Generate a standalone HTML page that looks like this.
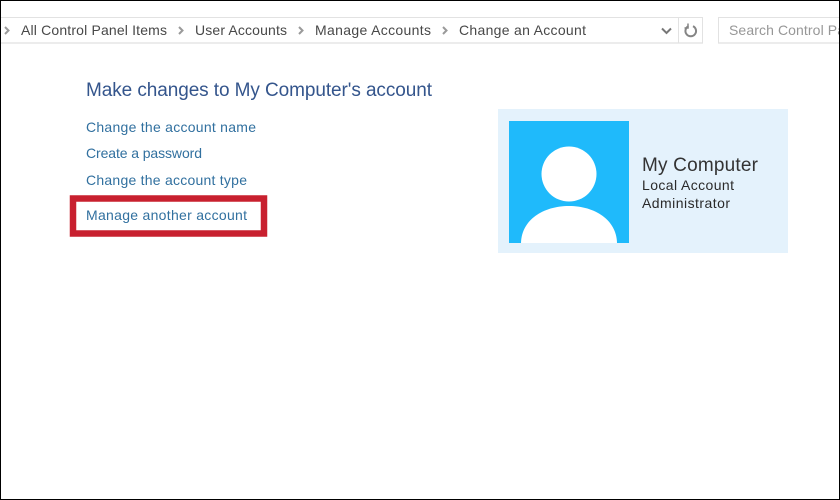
<!DOCTYPE html>
<html><head><meta charset="utf-8"><style>
html,body{margin:0;padding:0;background:#fff;width:840px;height:500px;overflow:hidden}
svg{display:block}
text{font-family:"Liberation Sans",sans-serif;filter:blur(.25px)}
</style></head><body>
<svg width="840" height="500" viewBox="0 0 840 500" xmlns="http://www.w3.org/2000/svg">
<rect width="840" height="500" fill="#fff"/>
<!-- address bar -->
<rect x="1" y="17" width="702" height="1" fill="#e2e2e2"/>
<rect x="1" y="42" width="702" height="2" fill="#ececec"/>
<rect x="678" y="17" width="1" height="26" fill="#e2e2e2"/>
<rect x="702" y="17" width="1" height="26" fill="#e2e2e2"/>
<rect x="718" y="17" width="122" height="1" fill="#e2e2e2"/>
<rect x="718" y="42" width="122" height="2" fill="#ececec"/>
<rect x="718" y="17" width="1" height="26" fill="#e2e2e2"/>
<g fill="none" stroke="#9a9a9a" stroke-width="2">
<path d="M5 27l3.500 3.500-3.500 3.500"/>
<path d="M179 27l3.500 3.500-3.500 3.500"/>
<path d="M299 27l3.500 3.500-3.500 3.500"/>
<path d="M443 27l3.500 3.500-3.500 3.500"/>
</g>
<g font-size="14" fill="#484848">
<text x="21" y="35" textLength="146" lengthAdjust="spacing">All Control Panel Items</text>
<text x="195" y="35" textLength="92" lengthAdjust="spacing">User Accounts</text>
<text x="315" y="35" textLength="116" lengthAdjust="spacing">Manage Accounts</text>
<text x="459" y="35" textLength="127" lengthAdjust="spacing">Change an Account</text>
</g>
<path d="M662 28.500l4.500 4.500 4.500-4.500" fill="none" stroke="#777" stroke-width="2"/>
<path d="M688.500 26.200a5.300 5.300 0 1 0 4.500 0" fill="none" stroke="#858585" stroke-width="2"/>
<path d="M688 23.500v4.500h-3.500" fill="none" stroke="#858585" stroke-width="1.500"/>
<text x="729" y="35" font-size="14" fill="#979797" textLength="135" lengthAdjust="spacing">Search Control Panel</text>
<!-- heading and links -->
<text x="86" y="96" font-size="19" fill="#34558c" textLength="346" lengthAdjust="spacing">Make changes to My Computer's account</text>
<g font-size="14" fill="#31709f">
<text x="86" y="132" textLength="170" lengthAdjust="spacing">Change the account name</text>
<text x="86" y="158" textLength="116" lengthAdjust="spacing">Create a password</text>
<text x="86" y="185" textLength="161" lengthAdjust="spacing">Change the account type</text>
<text x="86" y="220" textLength="161" lengthAdjust="spacing">Manage another account</text>
</g>
<rect x="73" y="198.500" width="191" height="35" fill="none" stroke="#c8202f" stroke-width="6.500"/>
<!-- account tile -->
<rect x="498" y="109" width="290" height="144" fill="#e4f2fc"/>
<rect x="509" y="121" width="120" height="122" fill="#1fbafb"/>
<circle cx="569" cy="174" r="27.500" fill="#fff"/>
<path d="M521 243C521.500 220 543 206 569 206C595 206 616.500 220 617 243Z" fill="#fff"/>
<text x="642" y="171" font-size="19" fill="#333" textLength="116" lengthAdjust="spacing">My Computer</text>
<text x="642" y="190" font-size="14" fill="#2a2a2a" textLength="92" lengthAdjust="spacing">Local Account</text>
<text x="642" y="208" font-size="14" fill="#2a2a2a" textLength="88" lengthAdjust="spacing">Administrator</text>
<!-- black frame -->
<rect x="0" y="0" width="840" height="1" fill="#000"/>
<rect x="0" y="499" width="840" height="1" fill="#000"/>
<rect x="0" y="0" width="1" height="500" fill="#000"/>
<rect x="839" y="0" width="1" height="500" fill="#000"/>
</svg>
</body></html>
